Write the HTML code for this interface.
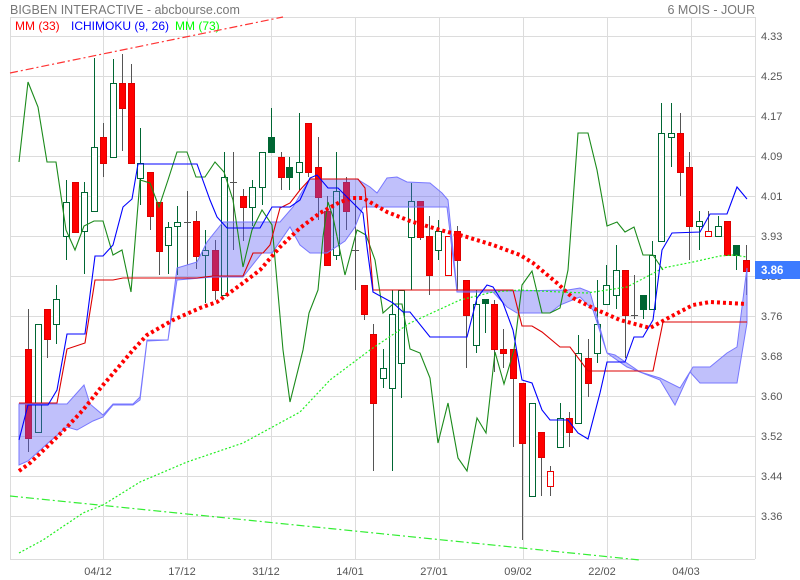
<!DOCTYPE html>
<html><head><meta charset="utf-8"><style>
html,body{margin:0;padding:0;background:#fff;width:800px;height:580px;overflow:hidden}
svg{display:block;font-family:"Liberation Sans",sans-serif}
</style></head><body>
<svg width="800" height="580" viewBox="0 0 800 580" xmlns="http://www.w3.org/2000/svg">
<rect width="800" height="580" fill="#fff"/>
<g stroke="#dcdcdc" stroke-width="1" fill="none">
<path d="M10 17.5H755M10 36.5H755M10 76.5H755M10 116.5H755M10 156.5H755M10 196.5H755M10 236.5H755M10 276.5H755M10 316.5H755M10 356.5H755M10 396.5H755M10 436.5H755M10 476.5H755M10 516.5H755M10 559.5H755"/>
<path d="M10.5 17V559M103.5 17V559M187.5 17V559M271.5 17V559M355.5 17V559M439.5 17V559M523.5 17V559M607.5 17V559M691.5 17V559M755.5 17V559"/>
</g>
<text x="10" y="14" font-size="12.5" fill="#777">BIGBEN INTERACTIVE - abcbourse.com</text>
<text x="755" y="14" font-size="12.5" fill="#777" text-anchor="end">6 MOIS - JOUR</text>
<text x="15" y="30" font-size="12" fill="#f00">MM (33)</text>
<text x="71" y="30" font-size="12" fill="#00f">ICHIMOKU (9, 26)</text>
<text x="175" y="30" font-size="12" fill="#0f0">MM (73)</text>
<g font-size="11" fill="#555">
<text x="761" y="40">4.33</text><text x="761" y="80">4.25</text><text x="761" y="120">4.17</text><text x="761" y="160">4.09</text><text x="761" y="200">4.01</text><text x="761" y="240">3.93</text><text x="761" y="280">3.85</text><text x="761" y="320">3.76</text><text x="761" y="360">3.68</text><text x="761" y="400">3.60</text><text x="761" y="440">3.52</text><text x="761" y="480">3.44</text><text x="761" y="520">3.36</text>
</g>
<g font-size="11" fill="#555" text-anchor="middle">
<text x="98" y="575">04/12</text><text x="182" y="575">17/12</text><text x="266" y="575">31/12</text><text x="350" y="575">14/01</text><text x="434" y="575">27/01</text><text x="518" y="575">09/02</text><text x="602" y="575">22/02</text><text x="686" y="575">04/03</text>
</g>
<!-- trendlines -->
<path d="M10 73L283 17" stroke="#f33" stroke-width="1.2" stroke-dasharray="8,3,2,3" fill="none"/>
<path d="M10 496L640 560" stroke="#3e3" stroke-width="1.2" stroke-dasharray="8,3,2,3" fill="none"/>
<!-- candles -->
<g id="c" stroke-width="1">
<g stroke="#555"><path d="M28.5 309V452M47.5 309V358M75.5 182V232M103.5 123V177M122.5 54V151M131.5 64V163M150.5 172V230M159.5 202V275M187.5 191V265M196.5 211V269M215.5 240V300M233.5 152V250M243.5 189V241M281.5 152V190M308.5 123V177M318.5 137V220M327.5 196V265M346.5 177V230M355.5 196V290M364.5 285V320M373.5 324V471M420.5 201V240M429.5 216V295M448.5 236V275M457.5 226V290M466.5 280V368M494.5 300V372M503.5 329V368M513.5 349V447M522.5 383V540M541.5 432V496M550.5 466V496M569.5 412V447M588.5 339V397M625.5 270V358M634.5 275V319M680.5 113V196M689.5 152V260M708.5 211V236M727.5 221V255M746.5 245V295"/></g>
<g stroke="#063"><path d="M38.5 324V432M56.5 285V344M66.5 180V260M84.5 182V274M94.5 58V211M113.5 59V157M140.5 128V205M168.5 222V274M177.5 206V275M205.5 230V303M224.5 152V295M252.5 180V226M262.5 152V205M271.5 108V152M289.5 157V190M299.5 113V190M336.5 152V260M383.5 349V388M392.5 290V471M401.5 290V398M411.5 183V290M438.5 220V260M476.5 290V353M485.5 299V333M532.5 403V496M560.5 403V447M578.5 335V423M597.5 280V363M606.5 265V304M616.5 245V309M643.5 295V319M652.5 241V309M661.5 103V241M671.5 103V167M699.5 211V250M718.5 216V236M736.5 245V270"/></g>
<g fill="#f00" stroke="#d00">
<rect x="25.5" y="349.5" width="6" height="89"/><rect x="44.5" y="309.5" width="6" height="30"/><rect x="72.5" y="182.5" width="6" height="50"/><rect x="100.5" y="137.5" width="6" height="26"/><rect x="119.5" y="83.5" width="6" height="25"/><rect x="128.5" y="83.5" width="6" height="80"/><rect x="147.5" y="172.5" width="6" height="44"/><rect x="156.5" y="202.5" width="6" height="49"/><rect x="193.5" y="221.5" width="6" height="35"/><rect x="212.5" y="250.5" width="6" height="40"/><rect x="240.5" y="196.5" width="6" height="11"/><rect x="278.5" y="157.5" width="6" height="20"/><rect x="305.5" y="123.5" width="6" height="49"/><rect x="315.5" y="167.5" width="6" height="30"/><rect x="324.5" y="211.5" width="6" height="54"/><rect x="343.5" y="182.5" width="6" height="29"/><rect x="361.5" y="285.5" width="6" height="29"/><rect x="370.5" y="334.5" width="6" height="69"/><rect x="417.5" y="201.5" width="6" height="36"/><rect x="426.5" y="236.5" width="6" height="39"/><rect x="454.5" y="231.5" width="6" height="29"/><rect x="463.5" y="280.5" width="6" height="35"/><rect x="491.5" y="304.5" width="6" height="45"/><rect x="500.5" y="349.5" width="6" height="4"/><rect x="510.5" y="349.5" width="6" height="29"/><rect x="519.5" y="383.5" width="6" height="60"/><rect x="538.5" y="432.5" width="6" height="25"/><rect x="566.5" y="418.5" width="6" height="14"/><rect x="585.5" y="358.5" width="6" height="25"/><rect x="622.5" y="270.5" width="6" height="45"/><rect x="677.5" y="133.5" width="6" height="39"/><rect x="686.5" y="167.5" width="6" height="59"/><rect x="724.5" y="221.5" width="6" height="34"/><rect x="743.5" y="260.5" width="6" height="11"/>
</g>
<g fill="#fff" stroke="#e00">
<rect x="445.5" y="236.5" width="6" height="39"/><rect x="547.5" y="471.5" width="6" height="15"/><rect x="705.5" y="231.5" width="6" height="5"/>
</g>
<g fill="#fff" stroke="#063">
<rect x="35.5" y="324.5" width="6" height="108"/><rect x="53.5" y="299.5" width="6" height="25"/><rect x="63.5" y="202.5" width="6" height="34"/><rect x="81.5" y="192.5" width="6" height="39"/><rect x="91.5" y="147.5" width="6" height="64"/><rect x="110.5" y="83.5" width="6" height="74"/><rect x="137.5" y="163.5" width="6" height="15"/><rect x="165.5" y="227.5" width="6" height="18"/><rect x="174.5" y="222.5" width="6" height="4"/><rect x="202.5" y="250.5" width="6" height="5"/><rect x="221.5" y="177.5" width="6" height="118"/><rect x="249.5" y="187.5" width="6" height="20"/><rect x="259.5" y="152.5" width="6" height="35"/><rect x="296.5" y="162.5" width="6" height="10"/><rect x="333.5" y="191.5" width="6" height="64"/><rect x="380.5" y="368.5" width="6" height="10"/><rect x="389.5" y="314.5" width="6" height="74"/><rect x="398.5" y="290.5" width="6" height="73"/><rect x="408.5" y="201.5" width="6" height="36"/><rect x="435.5" y="231.5" width="6" height="19"/><rect x="473.5" y="304.5" width="6" height="41"/><rect x="529.5" y="403.5" width="6" height="93"/><rect x="557.5" y="418.5" width="6" height="29"/><rect x="575.5" y="353.5" width="6" height="70"/><rect x="594.5" y="324.5" width="6" height="29"/><rect x="603.5" y="285.5" width="6" height="19"/><rect x="613.5" y="270.5" width="6" height="25"/><rect x="649.5" y="255.5" width="6" height="54"/><rect x="658.5" y="133.5" width="6" height="108"/><rect x="668.5" y="133.5" width="6" height="4"/><rect x="696.5" y="221.5" width="6" height="5"/><rect x="715.5" y="226.5" width="6" height="10"/>
</g>
<g fill="#063" stroke="#063">
<rect x="268.5" y="137.5" width="6" height="15"/><rect x="286.5" y="167.5" width="6" height="10"/><rect x="482.5" y="299.5" width="6" height="4"/><rect x="640.5" y="295.5" width="6" height="14"/><rect x="733.5" y="245.5" width="6" height="10"/>
</g>
<g stroke="#555"><path d="M184 222.5H191M230 182.5H237M352 250.5H359M631 315.5H638"/></g>
</g>
<!-- cloud -->
<path d="M19 404L67 404L84 385L90 404L103 415L113 404L133 404L140 397L147 340L168 340L177 268L197 262L207 242L223 222L280 222L293 207L303 190L310 179L357 179L370 187L377 193L387 178L397 177L407 182L430 183L442 193L448 200L457 290L477 290L513 291L568 290L580 288L590 292L607 353L615 355L640 372L660 378L680 388L693 367L710 367L727 353L737 347L745 283L747 268L747 323L737 383L700 383L690 372L675 405L660 380L640 372L627 367L607 353L593 310L580 297L560 305L550 313L517 313L507 307L493 292L457 292L447 207L363 207L355 227L345 241L327 253L310 253L300 245L290 227L272 253L262 253L243 277L213 277L177 280L168 340L147 341L140 400L133 405L113 405L103 417L93 421L77 430L67 427L48 443L28 461L19 465Z" fill="rgba(90,90,245,0.38)" stroke="#7777ff" stroke-width="1"/>
<!-- lines -->
<path d="M19 162L28 82L38 107L47 162L56 162L66 230L75 250L84 226L94 221L103 221L113 255L122 250L131 292L140 180L150 183L159 207L168 180L177 152L187 152L196 177L205 177L215 162L224 172L233 200L243 267L252 230L262 210L272 225L283 350L290 402L303 350L309 313L318 290L323 237L328 202L333 217L345 275L357 230L366 235L375 260L383 313L393 304L402 304L410 349L420 353L430 378L438 443L448 403L458 458L467 471L477 418L486 433L495 352L504 384L514 350L522 285L532 271L542 313L550 313L560 308L568 270L578 133L588 133L597 170L607 226L617 222L625 232L634 227L643 255L653 255L663 270" fill="none" stroke="#1a8a1a" stroke-width="1.1"/>
<path d="M19 471L30 463L50 444L67 427L83 410L103 385L110 377L133 350L147 335L173 320L200 308L217 302L243 283L260 270L280 247L300 228L320 213L340 202L353 198L363 198L387 212L410 221L440 230L467 237L493 245L520 255L533 263L557 283L573 298L595 309L620 320L650 328L670 317L693 305L710 302L747 304" fill="none" stroke="#f00" stroke-width="4" stroke-dasharray="3,3"/>
<path d="M19 553L43 540L83 513L103 505L140 482L187 462L243 443L300 412L330 380L370 350L410 323L460 300L493 292L520 290L560 292L587 293L627 287L650 275L663 268L693 262L720 256L733 255L747 257" fill="none" stroke="#2e2" stroke-width="1.2" stroke-dasharray="2,2"/>
<path d="M19 403L57 403L67 349L85 343L95 280L113 280L123 278L197 278L213 276L243 276L253 253L263 253L270 245L280 208L290 203L300 190L310 179L358 179L365 188L373 290L513 290L522 326L532 326L542 332L560 347L570 347L588 371L653 371L663 322L747 322" fill="none" stroke="#d00" stroke-width="1.1"/>
<path d="M19 440L28 405L48 405L57 390L67 334L85 334L95 256L103 256L113 245L123 207L132 199L138 164L197 164L210 200L217 217L227 228L260 228L272 207L290 207L300 200L310 178L317 175L328 188L338 188L363 213L367 247L373 292L393 303L403 312L410 312L430 337L467 337L477 298L487 285L493 287L503 303L513 330L522 380L532 383L542 410L550 420L568 420L578 433L588 439L600 393L607 362L625 362L634 337L643 337L653 320L662 250L672 233L700 232L710 214L727 214L737 187L747 199" fill="none" stroke="#00f" stroke-width="1.1"/>
<!-- price badge -->
<rect x="755" y="261" width="45" height="18" fill="#3d7bff"/>
<text x="761" y="274" font-size="11.5" font-weight="bold" fill="#fff">3.86</text>
</svg>
</body></html>
